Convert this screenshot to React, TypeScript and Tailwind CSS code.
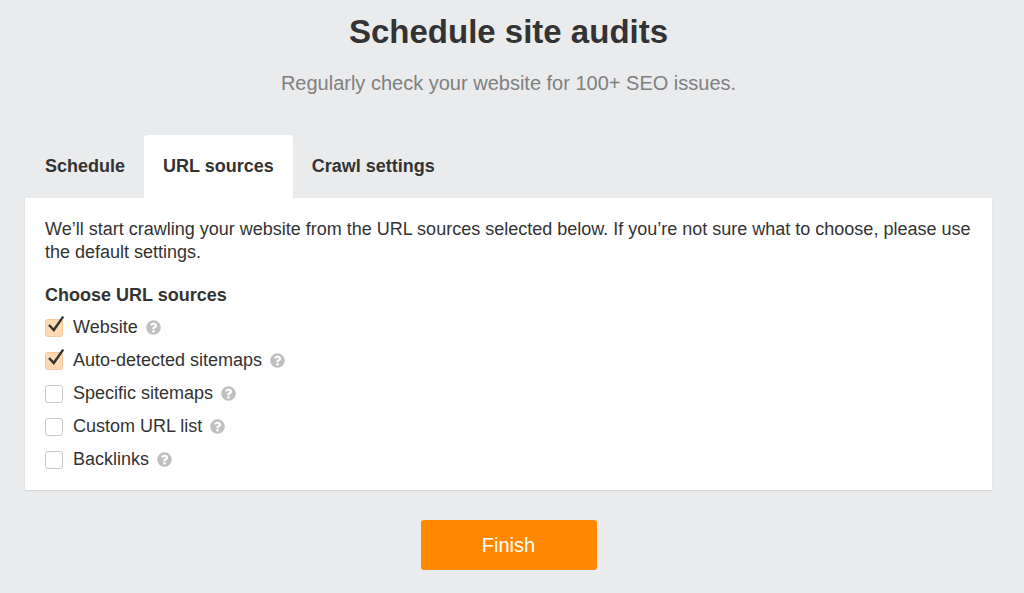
import React, { useState } from 'react';
import { FaQuestionCircle } from 'react-icons/fa';

const TABS = ['Schedule', 'URL sources', 'Crawl settings'];

const SOURCES = [
  { id: 'website', label: 'Website', checked: true },
  { id: 'auto-sitemaps', label: 'Auto-detected sitemaps', checked: true },
  { id: 'specific-sitemaps', label: 'Specific sitemaps', checked: false },
  { id: 'custom-list', label: 'Custom URL list', checked: false },
  { id: 'backlinks', label: 'Backlinks', checked: false },
];

const CheckMark = () => (
  <svg
    viewBox="0 0 20 20"
    className="absolute -top-1 left-0 hidden size-5 pointer-events-none peer-checked:block"
    fill="none"
    stroke="#333333"
    strokeWidth="2.4"
    aria-hidden="true"
  >
    <path d="M4 10 8.800 15 18.200 1.600" />
  </svg>
);

const SourceRow = ({ id, label, checked, onChange }: any) => (
  <li className="flex items-center h-[33px]">
    <span className="relative size-[18px] shrink-0">
      <input
        type="checkbox"
        id={id}
        checked={checked}
        onChange={onChange}
        className="peer block size-[18px] appearance-none rounded-[3px] border border-[#c9cacb] bg-white checked:border-[#f5c79e] checked:bg-[#ffd9b3]"
      />
      <CheckMark />
    </span>
    <label htmlFor={id} className="pl-[10px]">{label}</label>
    <button type="button" aria-label={`About ${label}`} className="ml-2 text-[#bfc0c0]">
      <FaQuestionCircle size={15} />
    </button>
  </li>
);

const App: React.FC = () => {
  const [activeTab, setActiveTab] = useState('URL sources');
  const [sources, setSources] = useState(SOURCES);

  const toggle = (id: string) => {
    setSources(sources.map((s) => (s.id === id ? { ...s, checked: !s.checked } : s)));
  };

  return (
    <main className="min-h-screen bg-[#eaebed] pt-3 pb-5 pl-[25px] pr-8 text-[18px] leading-[23px] text-[#333333] font-['Liberation_Sans',Arial,sans-serif]">
      <header className="text-center">
        <h1 className="text-[33px] leading-10 font-bold">Schedule site audits</h1>
        <p className="mt-[17px] text-[20px] leading-7 text-[#808080]">
          Regularly check your website for 100+ SEO issues.
        </p>
      </header>

      <div role="tablist" className="mt-[38px] flex">
        {TABS.map((tab) => (
          <button
            key={tab}
            type="button"
            role="tab"
            aria-selected={tab === activeTab}
            onClick={() => setActiveTab(tab)}
            className="h-[63px] rounded-t px-[19px] first:pl-5 font-bold aria-selected:bg-white"
          >
            {tab}
          </button>
        ))}
      </div>

      <section className="bg-white px-5 pt-5 pb-[14px] shadow-[0_1px_1px_#d3d5d7]">
        <p>
          We’ll start crawling your website from the URL sources selected below. If you’re not sure what to choose, please use the default settings.
        </p>
        <h2 className="mt-5 font-bold">Choose URL sources</h2>
        <ul className="mt-1">
          {sources.map((source) => (
            <SourceRow key={source.id} {...source} onChange={() => toggle(source.id)} />
          ))}
        </ul>
      </section>

      <div className="mt-[30px] flex justify-center">
        <button type="submit" className="h-[50px] w-44 rounded-[3px] bg-[#ff8800] text-[20px] text-white">
          Finish
        </button>
      </div>
    </main>
  );
};

export default App;
